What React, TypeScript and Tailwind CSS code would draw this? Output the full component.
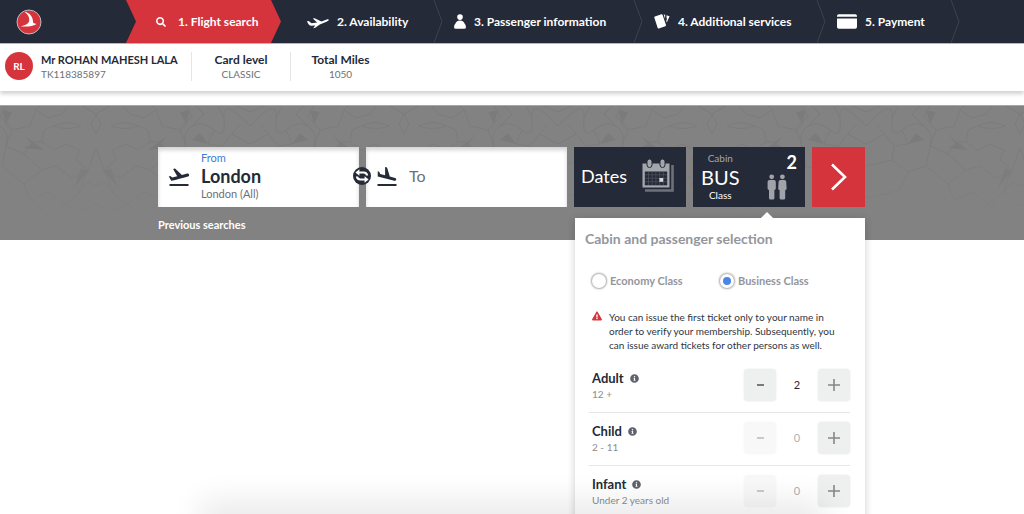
import React, { useState } from 'react';
import { FaExclamationTriangle, FaInfoCircle, FaSearch } from 'react-icons/fa';
import { MdFlightLand, MdFlightTakeoff } from 'react-icons/md';

interface Step {
  label: string;
  className: string;
  icon: React.ReactNode;
}

interface Passenger {
  id: string;
  title: string;
  note: string;
}

const PlaneIcon = () => (
  <svg viewBox="0 0 22 14" className="w-[22px] h-3.5" fill="currentColor">
    <path d="M0 6.2 1.6 6 4.6 8.3 10.2 7.4 5.8 3.6 7.6 3.2 14.4 6.4 19.8 4.4C21 4 22.2 4.5 21.7 5.3 21.2 6 20.2 6.4 19.4 6.7L12.8 9.4 8.2 12.8 6.2 13.2 8.2 10.4 4.4 10.8C2.4 10.8.8 8.8 0 6.2Z" />
  </svg>
);

const PersonIcon = () => (
  <svg viewBox="0 0 12 15" className="w-3 h-[15px]" fill="currentColor">
    <circle cx="6" cy="3.1" r="2.8" />
    <path d="M6 6.4C8.6 6.4 10.2 7.8 10.5 9.6 11.5 10.6 12 12 11.9 13.4Q11.8 14.8 10.4 14.8H1.6Q.2 14.8.1 13.4C0 12 .5 10.6 1.5 9.6 1.8 7.8 3.4 6.4 6 6.4Z" />
  </svg>
);

const ServicesIcon = () => (
  <svg viewBox="0 0 16 15" className="w-4 h-[15px]" fill="currentColor">
    <path d="M.3 3.6Q0 2.7.9 2.4L7.4.3Q8.3 0 8.6.9L12 11Q12.2 12 11.3 12.3L4.8 14.4Q3.9 14.6 3.6 13.8Z" />
    <path d="M9.7.5 11.4.8 11 4.8ZM12.3 1.2 15.6 2.3 12.8 8.6 11.9 6.2Z" />
    <path d="M11.7.8 12.7 6.6" stroke="#242a37" strokeWidth=".8" />
  </svg>
);

const CardIcon = () => (
  <svg viewBox="0 0 20 15" className="w-5 h-[15px]" fill="currentColor">
    <path d="M0 2.8V2Q0 .2 1.8.2H18.2Q20 .2 20 2V2.8ZM0 4.5H20V13Q20 14.8 18.2 14.8H1.8Q0 14.8 0 13Z" />
  </svg>
);

const LogoIcon = () => (
  <svg viewBox="0 0 26 26" className="w-[26px] h-[26px]">
    <circle cx="13" cy="13" r="12" fill="#d6343c" stroke="#b9bcc2" strokeWidth="1" />
    <path
      d="M8.4 2.8C14.5 4 17 8.5 17.2 14L20.5 14.9 18 16.3C14.5 17.6 10 17.7 4.4 17.3 9 16.5 12.5 15 13.2 11.7 13.7 8.5 12 5.4 8.4 2.8Z"
      fill="#fff"
    />
  </svg>
);

const SwapIcon = () => (
  <svg viewBox="0 0 18 18" className="w-[18px] h-[18px]">
    <circle cx="9" cy="9" r="9" fill="#242a37" />
    <path
      d="M6.4 2.2 2.4 5.5 6.4 8.8V6.6H10.6Q12.6 6.6 13 8.4H15.2Q14.6 4.4 10.8 4.4H6.4ZM11.6 9.2 15.6 12.5 11.6 15.8V13.6H7.2Q3.4 13.6 2.8 9.6H5Q5.4 11.4 7.4 11.4H11.6Z"
      fill="#fff"
    />
  </svg>
);

const CalendarIcon = () => (
  <svg viewBox="0 0 33 34" className="w-[33px] h-[34px]">
    <path d="M30.5 6V31.5H3" fill="none" stroke="#6d717a" strokeWidth="2.6" />
    <path d="M.5 4.5H27.5V28.5H.5Z" fill="#a3a6ad" />
    <path d="M2.8 12.5H25.2V26.3H2.8Z" fill="#242a37" />
    <path d="M3 15.8H25M3 19.2H25M3 22.7H25M6.5 13V26M10.2 13V26M13.9 13V26M17.6 13V26M21.3 13V26" stroke="#4b505c" strokeWidth=".8" />
    <path d="M17.4 19H21.2V22.8H17.4Z" fill="#d5d7da" />
    <rect x="5" y="0" width="5" height="8.5" rx="2.5" fill="#a3a6ad" stroke="#242a37" />
    <rect x="18" y="0" width="5" height="8.5" rx="2.5" fill="#a3a6ad" stroke="#242a37" />
  </svg>
);

const PeopleIcon = () => (
  <svg viewBox="0 0 20 26" className="w-5 h-[26px]" fill="#a0a3aa">
    <circle cx="4.7" cy="2.8" r="2.4" />
    <path d="M2.4 6H7Q8.8 6 8.8 8V14.6Q8.8 16 7.4 16V24Q7.4 25.5 6 25.5H3.4Q2 25.5 2 24V16Q.6 16 .6 14.6V8Q.6 6 2.4 6Z" />
    <circle cx="15.4" cy="2.8" r="2.4" />
    <path d="M13.4 6H17.4Q19 6 19.2 7.6L19.6 14.4Q19.6 16 18.2 16V24Q18.2 25.5 16.8 25.5H14Q12.6 25.5 12.6 24V16Q11.2 16 11.2 14.4L11.6 7.6Q11.8 6 13.4 6Z" />
  </svg>
);

const BandPattern = () => (
  <svg className="absolute inset-0 w-full h-full" aria-hidden="true">
    <defs>
      <linearGradient id="fade" x1="0" y1="0" x2="0" y2="1">
        <stop offset=".35" stopColor="#fff" />
        <stop offset=".9" stopColor="#000" />
      </linearGradient>
      <mask id="fadeMask">
        <rect width="100%" height="100%" fill="url(#fade)" />
      </mask>
      <pattern id="girih" x="96" width="308" height="135" patternUnits="userSpaceOnUse">
        <g id="girihHalf" fill="none" stroke="#7b7b7b">
          <path d="M0 8 5 18 0 28M0 8 14 0M15 20Q28 13 42 20 28 25 15 20M28 0 34 8 48 12 60 4 56 0M42 20 52 24 54 36 42 44 30 38 16 44 20 54 8 64 0 42" />
          <path d="M8 64 24 72 40 60 54 64 72 48 64 36 54 36M72 48 90 40 84 24 66 20 60 4M84 24 96 10 90 0M90 40Q86 26 96 20T118 24 128 12 154 20M96 20 108 8 100 0M118 24 112 38 126 40 136 28 154 38M128 12 122 0M136 28 144 18M154 6 140 0" />
          <path d="M8 64 18 88 32 98 48 86 66 94 72 78 54 64M0 80 8 76 18 88M0 98 16 106 32 98 44 112 66 94M90 40 94 60 112 66 128 54 154 60M94 60 72 78M112 66 120 84 154 92M128 54 126 40" />
          <path d="M7 65 22 82 15 62ZM52 44 71 30 64 38 72 42ZM84 6 94 4 90 18ZM96 34 104 27 112 38Z" fill="#7b7b7b" stroke="none" />
        </g>
        <use href="#girihHalf" transform="translate(308 0) scale(-1 1)" />
      </pattern>
    </defs>
    <rect width="100%" height="100%" fill="url(#girih)" mask="url(#fadeMask)" />
  </svg>
);

const steps: Step[] = [
  { label: '1. Flight search', className: 'w-[145px] pl-[30px] gap-3 bg-[#d6343c]', icon: <FaSearch className="w-2.5 h-2.5" /> },
  { label: '2. Availability', className: 'w-[163px] pl-9 gap-2', icon: <PlaneIcon /> },
  { label: '3. Passenger information', className: 'w-[200px] pl-5 gap-2', icon: <PersonIcon /> },
  { label: '4. Additional services', className: 'w-[183px] pl-5 gap-2', icon: <ServicesIcon /> },
  { label: '5. Payment', className: 'w-[134px] pl-5 gap-2', icon: <CardIcon /> },
];

const passengers: Passenger[] = [
  { id: 'adult', title: 'Adult', note: '12 +' },
  { id: 'child', title: 'Child', note: '2 - 11' },
  { id: 'infant', title: 'Infant', note: 'Under 2 years old' },
];

const cabins = ['Economy Class', 'Business Class'];

const Header: React.FC = () => (
  <header className="flex h-[43px] bg-[#242a37] text-white">
    <a href="#home" aria-label="Home" className="flex items-center w-[126px] pl-4 shrink-0">
      <LogoIcon />
    </a>
    <nav>
      <ol className="flex h-full">
        {steps.map((step, index) => (
          <li key={step.label} className={`relative flex items-center shrink-0 text-[12px] font-bold whitespace-nowrap ${step.className}`}>
            {index === 0 && (
              <svg viewBox="0 0 10 43" preserveAspectRatio="none" className="absolute left-0 top-0 w-2.5 h-full">
                <path d="M0 0 10 21.5 0 43Z" fill="#242a37" />
              </svg>
            )}
            {step.icon}
            <span>{step.label}</span>
            <svg viewBox="0 0 10 43" preserveAspectRatio="none" className="absolute left-full top-0 w-2.5 h-full">
              {index === 0 ? (
                <path d="M0 0 10 21.5 0 43Z" fill="#d6343c" />
              ) : (
                <path d="M0 0 8 21.5 0 43" fill="none" stroke="#3d424e" />
              )}
            </svg>
          </li>
        ))}
      </ol>
    </nav>
  </header>
);

const MemberBar: React.FC = () => (
  <section className="relative flex items-center h-[48px] pb-[3px] border-t border-[#b5b7bc] bg-white shadow-[0_3px_4px_rgba(0,0,0,0.18)] text-center">
    <div className="flex items-center gap-2 pl-[5px] w-[191px] text-left">
      <span className="flex items-center justify-center w-7 h-7 rounded-full bg-[#d6343c] text-white text-[10px] font-bold shrink-0">
        RL
      </span>
      <div className="whitespace-nowrap">
        <p className="text-[11px] leading-[15px] font-bold">Mr ROHAN MAHESH LALA</p>
        <p className="text-[10px] leading-[14px] text-[#6d7078]">TK118385897</p>
      </div>
    </div>
    <div className="w-[99px] border-l border-[#e5e5e5]">
      <p className="text-[12px] leading-[15px] font-bold">Card level</p>
      <p className="text-[10px] leading-[14px] text-[#6d7078]">CLASSIC</p>
    </div>
    <div className="w-[100px] border-l border-[#e5e5e5]">
      <p className="text-[12px] leading-[15px] font-bold">Total Miles</p>
      <p className="text-[10px] leading-[14px] text-[#6d7078]">1050</p>
    </div>
  </section>
);

const CabinPanel: React.FC<{
  cabin: string;
  onCabinChange: (cabin: string) => void;
  counts: Record<string, number>;
  onCountChange: (id: string, delta: number) => void;
}> = ({ cabin, onCabinChange, counts, onCountChange }) => (
  <div className="absolute right-px top-[71px] w-[290px] h-[340px] bg-white shadow-[0_2px_8px_rgba(0,0,0,0.2)] px-2.5 pt-3">
    <span className="absolute -top-1 left-[187px] w-2.5 h-2.5 rotate-45 bg-white" />
    <h2 className="text-[14px] leading-[18px] font-bold text-[#94969d]">Cabin and passenger selection</h2>

    <div className="flex pl-[7px] pt-[22px]">
      {cabins.map((name) => (
        <label key={name} className="flex items-center gap-1 w-32 text-[11px] leading-[22px] font-bold text-[#94969d]">
          <input
            type="radio"
            name="cabin"
            checked={cabin === name}
            onChange={() => onCabinChange(name)}
            className="appearance-none w-3.5 h-3.5 rounded-full border-[3px] border-white bg-white checked:bg-[#4a86e8] shadow-[0_0_2px_1px_rgba(0,0,0,0.35)]"
          />
          {name}
        </label>
      ))}
    </div>

    <div className="flex gap-[7px] pl-[7px] pr-2.5 pt-[18px] text-[#2f3542]">
      <FaExclamationTriangle className="w-2.5 h-2.5 mt-px shrink-0 text-[#d6343c]" />
      <p className="text-[10px] leading-[14px]">
        You can issue the first ticket only to your name in order to verify your membership. Subsequently, you can issue award tickets for other persons as well.
      </p>
    </div>

    <ul className="pt-2 pl-1 pr-[5px]">
      {passengers.map((passenger) => {
        const count = counts[passenger.id];
        return (
          <li key={passenger.id} className="flex items-center justify-between h-[53px] pl-[3px] pb-0.5 border-b border-[#e6e6e6]">
            <div>
              <p className="flex items-center gap-1.5 text-[13px] leading-[17px] font-bold">
                {passenger.title}
                <FaInfoCircle className="w-[9px] h-[9px] text-[#5f636d]" />
              </p>
              <p className="text-[10px] leading-[14px] text-[#8b8d94]">{passenger.note}</p>
            </div>
            <div className="flex items-center">
              <button
                type="button"
                aria-label={`Remove ${passenger.title}`}
                disabled={count === 0}
                onClick={() => onCountChange(passenger.id, -1)}
                className="flex items-center justify-center w-8 h-8 rounded-sm bg-[#eeefef] shadow-[0_0_2px_#e4e4e4] disabled:opacity-40"
              >
                <span className="w-[7px] h-0.5 bg-[#77797f]" />
              </button>
              <span className={`w-[42px] text-center text-[11px] ${count ? 'text-[#242a37]' : 'text-[#aeb0b4]'}`}>{count}</span>
              <button
                type="button"
                aria-label={`Add ${passenger.title}`}
                onClick={() => onCountChange(passenger.id, 1)}
                className="flex items-center justify-center w-8 h-8 rounded-sm bg-[#eeefef] shadow-[0_0_2px_#e4e4e4]"
              >
                <svg viewBox="0 0 12 12" className="w-3 h-3" stroke="#85878c" strokeWidth="1.6">
                  <path d="M6 0V12M0 6H12" />
                </svg>
              </button>
            </div>
          </li>
        );
      })}
    </ul>
  </div>
);

const App: React.FC = () => {
  const [from, setFrom] = useState('London');
  const [to, setTo] = useState('');
  const [cabin, setCabin] = useState('Business Class');
  const [panelOpen, setPanelOpen] = useState(true);
  const [counts, setCounts] = useState<Record<string, number>>({ adult: 2, child: 0, infant: 0 });

  const changeCount = (id: string, delta: number) => {
    setCounts((prev) => ({ ...prev, [id]: Math.max(0, prev[id] + delta) }));
  };

  const total = counts.adult + counts.child + counts.infant;

  return (
    <div className="relative h-screen overflow-hidden bg-white text-[#242a37] font-['Lato','Open_Sans',sans-serif]">
      <Header />
      <MemberBar />

      <main className="relative mt-3.5 h-[135px] bg-[#828282] pt-[41px] border-t border-[#a5a5a5]">
        <BandPattern />
        <form className="relative mx-auto max-w-[708px]" onSubmit={(e) => e.preventDefault()}>
          <div className="flex gap-[7px] h-[60px] pr-px">
            <div className="relative flex flex-1 items-center gap-2.5 pl-[9px] bg-white shadow-[inset_0_3px_4px_rgba(0,0,0,0.18)]">
              <MdFlightTakeoff className="w-6 h-6 shrink-0" />
              <div className="min-w-0 pb-0.5">
                <label htmlFor="from" className="block text-[11px] leading-[14px] text-[#3f7bd8]">From</label>
                <input
                  id="from"
                  value={from}
                  onChange={(e) => setFrom(e.target.value)}
                  className="block w-full h-[22px] text-[18px] font-bold outline-none"
                />
                <p className="text-[11px] leading-[14px] text-[#6d7078]">London (All)</p>
              </div>
              <button type="button" aria-label="Swap cities" className="absolute -right-3 top-5 z-10">
                <SwapIcon />
              </button>
            </div>
            <div className="flex flex-1 items-center gap-2.5 pl-[9px] bg-white shadow-[inset_0_3px_4px_rgba(0,0,0,0.18)]">
              <MdFlightLand className="w-6 h-6 shrink-0" />
              <input
                aria-label="To"
                placeholder="To"
                value={to}
                onChange={(e) => setTo(e.target.value)}
                className="w-full min-w-0 pb-0.5 text-[16px] placeholder:text-[#6d7078] outline-none"
              />
            </div>
            <button type="button" className="flex items-center justify-between w-28 pl-[7px] pr-[11px] pb-0.5 bg-[#242a37] text-white text-[18px]">
              Dates
              <CalendarIcon />
            </button>
            <button
              type="button"
              onClick={() => setPanelOpen(!panelOpen)}
              className="flex justify-between w-28 px-2 bg-[#242a37] text-white"
            >
              <span className="flex flex-col items-center pt-1">
                <span className="text-[10px] leading-[14px] text-[#a3a6ad]">Cabin</span>
                <span className="text-[20px] leading-6">BUS</span>
                <span className="text-[10px] leading-3">Class</span>
              </span>
              <span className="flex flex-col items-end pt-[3px]">
                <span className="text-[18px] leading-6 font-bold">{total}</span>
                <span className="pr-2.5">
                  <PeopleIcon />
                </span>
              </span>
            </button>
            <button type="submit" aria-label="Search flights" className="flex items-center justify-center w-[53px] bg-[#d6343c]">
              <svg viewBox="0 0 18 28" className="w-[18px] h-7" fill="none" stroke="#fff" strokeWidth="2.6">
                <path d="M2 1.5 15 14 2 26.5" />
              </svg>
            </button>
          </div>
          <a href="#previous" className="inline-block pt-[11px] text-[11px] leading-[14px] font-bold text-white">
            Previous searches
          </a>
          {panelOpen && (
            <CabinPanel cabin={cabin} onCabinChange={setCabin} counts={counts} onCountChange={changeCount} />
          )}
        </form>
      </main>

      <div className="pointer-events-none absolute inset-x-[212px] -bottom-4 h-4 shadow-[0_0_32px_12px_rgba(0,0,0,0.09)]" />
    </div>
  );
};

export default App;
